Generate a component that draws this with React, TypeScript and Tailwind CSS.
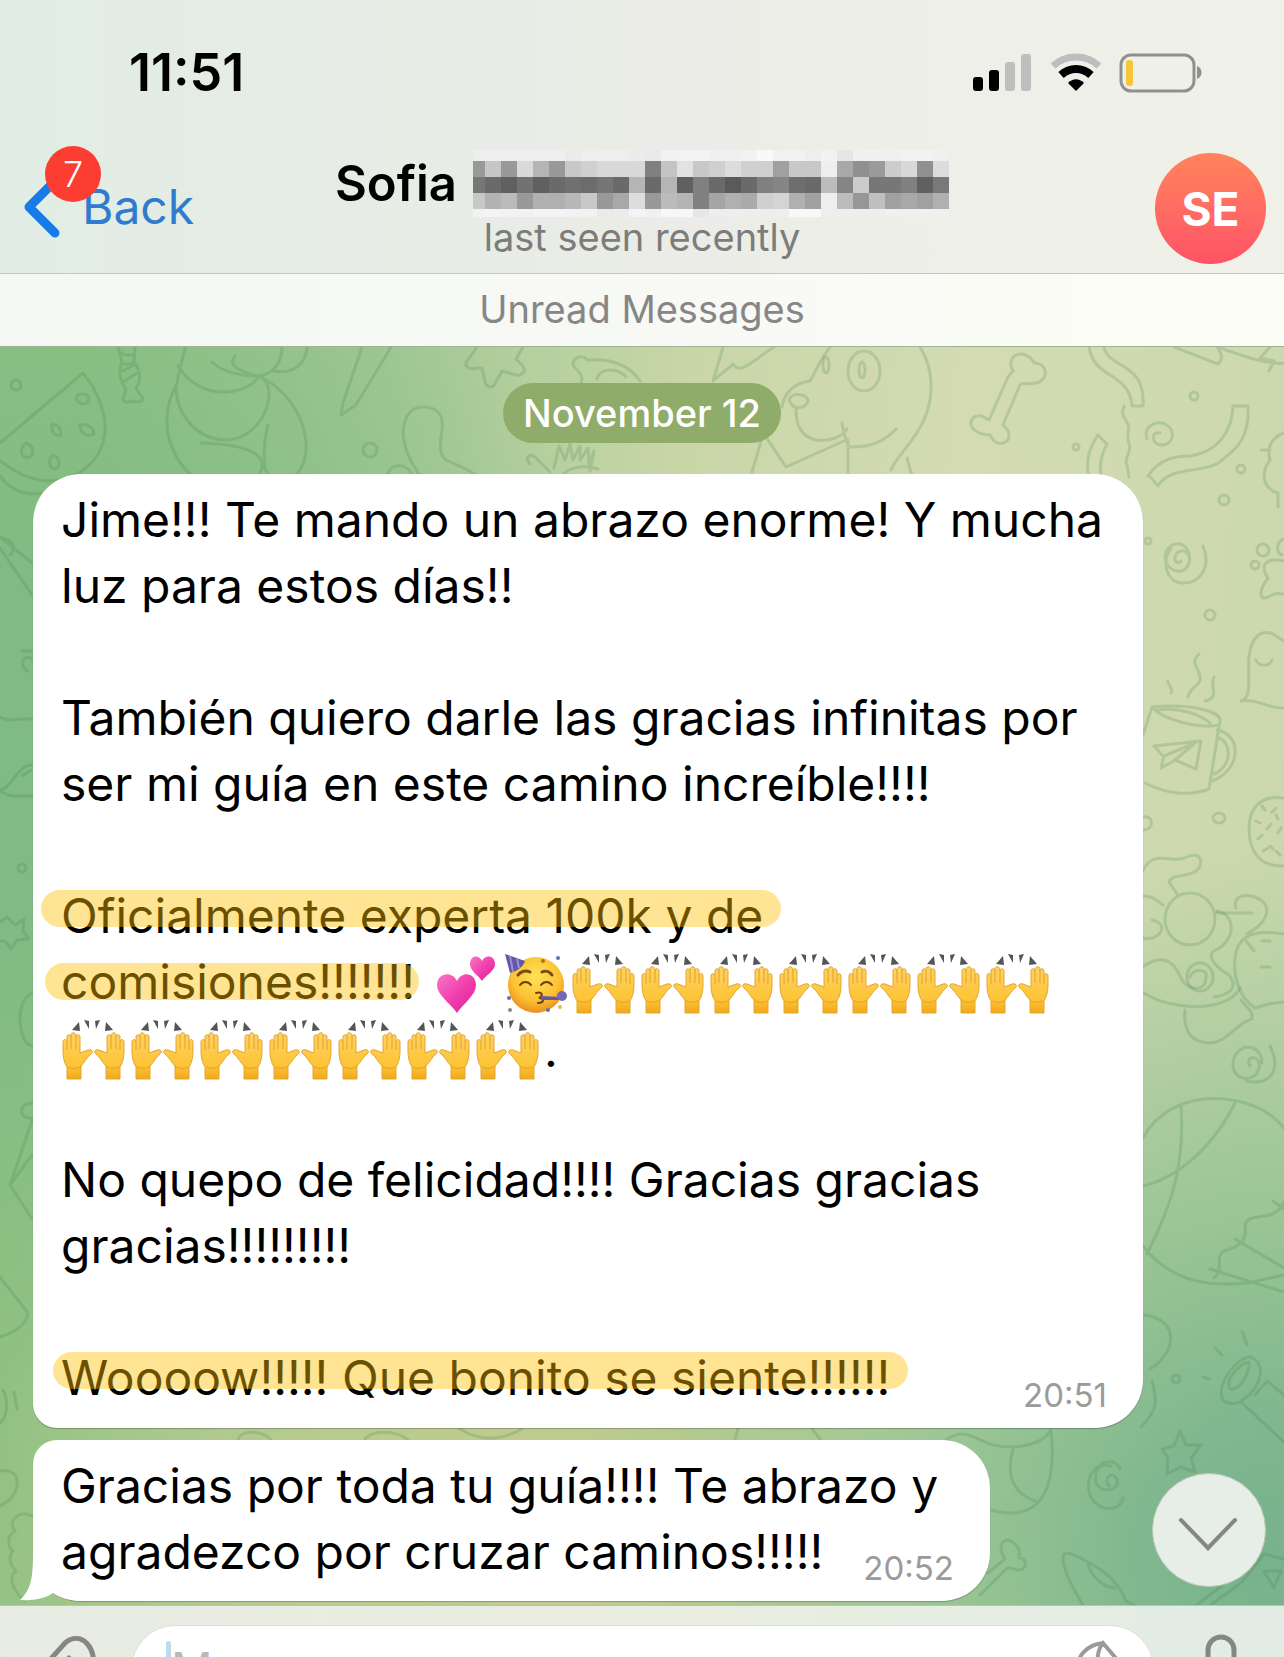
import type { ReactNode } from "react"

// grey levels of the masked surname, one pair of hex digits per cell
const maskRows = [
    { y: 0, h: 11, cells: "eeeeeeeeeeefebeeeeeeeceaf2f3f3f0f0f2f9f2f2eef2e6f0f0f0f2f2f0" },
    { y: 11, h: 16, cells: "99c699dab599c8d0d8d8d880c4e2c8cfdcd0d0a0c8c8eea8909accd890dc" },
    { y: 27, h: 16, cells: "776a6072606a706c756ab56ab560806a5a6a80856e6abc85cc7777806079" },
    { y: 43, h: 16, cells: "c8b2ba99b0b0b8c899a8dd99bbb480a5b0aad0d4b0a0eebc96c0a0a8a0b0" },
    { y: 59, h: 8, cells: "f2f4f2f2f4f4f2f2eaecf4f0f7f7e6eeeeeeeeeef8f8eeeeeeeef0f0f0f0" },
]

function MaskedName() {
    return (
        <svg className="h-[67px] w-[476px] shrink-0" viewBox="0 0 476 67" shapeRendering="crispEdges" aria-hidden="true">
            {maskRows.map((row) =>
                (row.cells.match(/../g) ?? []).map((c, i) => (
                    <rect
                        key={row.y + "-" + i}
                        x={i === 0 ? 0 : 12 + (i - 1) * 16}
                        y={row.y}
                        width={i === 0 ? 12 : 16}
                        height={row.h}
                        fill={"#" + c + c + c}
                    />
                ))
            )}
        </svg>
    )
}

function Hands() {
    return (
        <svg className="h-[62px] w-[69px] shrink-0" viewBox="0 0 69 62" aria-hidden="true">
            <defs>
                <linearGradient id="skin" x1="0" y1="0" x2="0" y2="1">
                    <stop offset="0" stopColor="#ffd262" />
                    <stop offset="0.7" stopColor="#fdc436" />
                    <stop offset="1" stopColor="#f3a81c" />
                </linearGradient>
                <g id="hand">
                    <path
                        d="M6 60V48C3 43 2 38 2 32V23c0-3 3-3 4-1V18c0-3 4-3 4 0v-2c0-3 4-3 5 0v2c0-3 4-3 4 0v16l8-3c4-1 6 2 3 4-4 3-6 8-10 12V60Z"
                        fill="url(#skin)"
                        stroke="#e3a530"
                        strokeWidth="1"
                    />
                    <path d="M6 22v9M10 18v12M15 18v12M7 48c5 2 9 2 13-1" stroke="#e0a22e" strokeWidth="1" fill="none" />
                </g>
            </defs>
            <use href="#hand" />
            <use href="#hand" transform="matrix(-1 0 0 1 65 0)" />
            <path d="m18 3-7 8 8 1Zm5-2 5 1 0 8Zm16 0-5 1 1 8Zm6 2 7 8-8 1Z" fill="#555" />
        </svg>
    )
}

function Hearts() {
    return (
        <svg className="h-[62px] w-[69px] shrink-0" viewBox="0 0 69 62" aria-hidden="true">
            <defs>
                <linearGradient id="pink" x1="0" y1="0" x2="1" y2="1">
                    <stop offset="0" stopColor="#f977c4" />
                    <stop offset="0.5" stopColor="#f23fae" />
                    <stop offset="1" stopColor="#dd1f95" />
                </linearGradient>
            </defs>
            <path d="M24 60C17 50 4 42 4 32c0-12 15-15 20-4 5-11 19-8 19 4 0 10-12 18-19 28Z" fill="url(#pink)" />
            <path d="M49 28c-4-6-12-10-12-17C37 2 46 1 49 8c3-7 13-6 13 3 0 7-9 11-13 17Z" fill="url(#pink)" />
        </svg>
    )
}

function PartyFace() {
    return (
        <svg className="h-[62px] w-[69px] shrink-0" viewBox="0 0 69 62" aria-hidden="true">
            <defs>
                <radialGradient id="face" cx="0.5" cy="0.35" r="0.65">
                    <stop offset="0" stopColor="#ffe257" />
                    <stop offset="0.65" stopColor="#fbc233" />
                    <stop offset="1" stopColor="#ea8f1e" />
                </radialGradient>
            </defs>
            <circle cx="34" cy="32" r="28" fill="url(#face)" />
            <path d="M3 1 23 8c-2 6-8 10-15 12Z" fill="#6556a8" />
            <path d="m8 3 3 16M15 5l2 10" stroke="#9b90d2" strokeWidth="2" />
            <path d="M16 22c3-4 8-5 12-3M40 19c4-2 8 0 10 3" stroke="#7a4b12" strokeWidth="3" strokeLinecap="round" fill="none" />
            <path d="M18 32c3-4 8-4 11 0M39 32c3-4 8-4 11 0" stroke="#6d3f0d" strokeWidth="2" strokeLinecap="round" fill="none" />
            <path d="M34 40c6-2 8 3 3 5 6 0 5 5-1 5" stroke="#6d3f0d" strokeWidth="2" strokeLinecap="round" fill="none" />
            <path d="m39 43 19 1v3l-19 0Z" fill="#6556a8" />
            <circle cx="60" cy="43" r="5" fill="#7567b6" />
            <circle cx="56" cy="5" r="2" fill="#5c73b4" />
            <circle cx="41" cy="8" r="2" fill="#a8741d" />
            <circle cx="7" cy="45" r="2" fill="#7567b6" />
            <circle cx="8" cy="57" r="2" fill="#888" />
            <circle cx="46" cy="57" r="2" fill="#5c73b4" />
            <circle cx="58" cy="54" r="2" fill="#e8b84c" />
        </svg>
    )
}

function Doodles() {
    return (
        <svg
            className="absolute inset-0 h-full w-full"
            viewBox="0 346 1284 1260"
            preserveAspectRatio="xMidYMin slice"
            fill="none"
            stroke="#3b7d47"
            strokeOpacity="0.2"
            strokeWidth="3"
            strokeLinecap="round"
            strokeLinejoin="round"
            aria-hidden="true"
        >
            {/* watermelon */}
            <path d="M0 442 83 372C98 390 106 412 105 430 103 458 80 479 50 480 30 480 14 470 0 460M0 475c12 16 26 20 42 17" />
            <path d="M76 398c2-7 12-6 13 0-1 7-10 6-13 0ZM52 423c8 1 10 8 9 12-8 0-10-6-9-12ZM80 424c8-2 14 4 14 9-8 4-14-2-14-9ZM26 442c8 3 9 11 2 15-8-2-9-9-2-15ZM53 454c8 4 8 11 2 14-7-2-7-9-2-14Z" />
            <circle cx="16" cy="384" r="5" />
            {/* candy */}
            <path d="M118 346 122 361C118 370 119 377 126 389L123 397c0 6 5 4 9 3 4 1 11 2 11-3l-7-9c5-8 5-18-2-27l1-15M121 352c5 3 10 3 14 0M121 362c6 2 9 2 13-1M120 371l15-7M123 381l14-9" />
            {/* penguin */}
            <path d="M185 346c-3 17-8 29-8 37-13 22-12 46-5 63 5 14 14 24 22 30M178 365c10 16 26 26 45 26 18 0 30-7 36-16M176 385c0 30 22 53 49 54 25 0 44-23 44-47 0-8-3-13-10-17M282 346c0 17-10 28-25 29-18 0-36-5-45-14M235 355c-8 10 5 15 22 20M307 346c-1 18-14 27-33 24M259 375c25 12 45 38 47 67 1 18-6 30-16 38-13 0-21-3-25-12-2-19 0-33 3-44M201 442c35 1 58 7 61 20 1 8-3 13-10 19" />
            {/* carrot */}
            <path d="M362 346 343 402 341 414 356 404 391 346" />
            {/* stars */}
            <path d="m477 346-10 14c-4 6 3 9 11 7l4 0 3 14c2 7 9 6 11 0l6-11 14 4c7 1 10-4 7-9l-7-7 7-12" />
            <circle cx="370" cy="449" r="7" />
            {/* worm */}
            <path d="M425 480c-12-12-22-34-22-49 1-18 10-26 22-25 14 1 19 10 17 23-3 16-2 26 4 30 12 6 22 8 32 17M387 475c5-15 21-14 28 4" />
            <path d="M580 384c6-11-4-14-7-20 0-8 8-11 15-5 30-2 44 9 52 21M597 378c2-11 20-12 29-2" />
            <path d="M530 463c-6-7 0-12 6-6l14 14M554 467l5-22 6 14 5-16 3 16 7-14 0 14 8-12 1 16 5-13-4 20M562 475c5-8 20-12 36-7" />
            {/* dog */}
            <path d="M713 380 723 346M713 380c8-8 17-13 20-17 7 12 20-4 41-17M830 346c-12 16-16 28-20 34-17 2-26 13-28 26M789 399c2-8 18-7 19 1-3 8-15 10-19-1ZM796 408c0 18 6 28 20 31 13 2 26-3 31-11M842 422c2 12 4 18 7 24 24 1 38-8 47-18M920 346c14 22 14 50 4 73-10 22-28 37-33 50M846 439l-60 27-20-30M762 437l-10 34M848 439v34M907 457l5 18" />
            <ellipse cx="864" cy="370" rx="16" ry="20" />
            <ellipse cx="862" cy="369" rx="3" ry="8" />
            <ellipse cx="826" cy="364" rx="3" ry="8" />
            {/* bone */}
            <path d="M1013 370C1004 353 1026 346 1034 362c12-1 17 16 2 20-10 2-15-1-16 2l-17 40c8 6 8 16 0 18-7 2-10-3-13-8-12 0-24-8-17-17 6-5 11-1 16 2l19-43Z" />
            <path d="M1089 346c5 33 40 24 43 59h11c3-45-35-37-39-59M1124 405c-4 10 2 12 3 17 5 4-2 14 2 20 4 8-6 15-2 22l2 12M1098 434c-15 22-9 34-10 42M1107 443c-10 18-5 26-7 34M1098 434l9 9" />
            <path d="M1174 346l44 17c7-8 2-12-1-17 20 6 46 18 67 16M1270 346l-10 11 14 3-5 10" />
            <path d="M1233 405h15c2 36-15 45-31 58-20 9-48 3-59 22-3-3-8-11-10-10 12-18 28-20 43-20 27-5 41-24 42-50Z" />
            <path d="M1147 438c-4-12 8-19 18-15 12 6 8 22-4 21-10-1-10-14-1-12M1181 560c-6 5-8-3-4-8 6-6 15 1 12 10-4 14-24 9-24-7 2-14 20-18 24-2M1203 545c8 19-1 37-20 37-17 0-22-22-12-34" />
            <circle cx="1194" cy="395" r="4" />
            <circle cx="1241" cy="468" r="4" />
            <circle cx="1224" cy="499" r="5" />
            <circle cx="1076" cy="446" r="3" />
            <circle cx="1148" cy="540" r="3" />
            <circle cx="1210" cy="614" r="5" />
            {/* bird and paw */}
            <path d="M1284 432c-10 4-18 12-14 27-10 14-7 28 8 33l0 14M1261 449h9" />
            <circle cx="1263" cy="549" r="6" />
            <circle cx="1255" cy="564" r="4" />
            <path d="M1284 538c-7 2-9 13-2 16M1284 560c-20-4-24 5-16 17-10 13-9 25 2 18 6-4 10-2 14-2" />
            {/* ghost */}
            <path d="M1241 700c12-4 6-22 8-45 3-18 10-26 22-23l13 8M1241 700c16-3 28 8 43 7M1256 659c3 7 13 7 16 0" />
            {/* mug */}
            <path d="M1152 706c43-4 70 6 68 14l-11 68c-20 8-45 4-64-6M1152 706l-9 28M1152 706c10 12 44 22 67 18M1158 709c20-3 42 4 52 13M1217 729c25 4 25 40-5 51M1217 736c16 5 15 30-3 37M1171 692c3-6-4-8-3-12M1188 696c3-12 14-11 12-21-2-9-10-13-1-22M1205 700c16-4 4-14 9-24" />
            <path d="m1154 745 47-5-5 28-21-9 20-17-31 13-3 12 16-9M1154 745l8 9" />
            <ellipse cx="1219" cy="817" rx="6" ry="5" />
            <path d="M1144 816c9-2 11 12 0 13" />
            {/* cookie */}
            <path d="M1284 797c-23-3-35 9-35 31 0 26 14 38 35 37M1262 805l3 4M1272 811l4-4M1256 820l4 2M1267 828l4-5M1278 832l3-5M1258 838l4-4M1270 845l3 3M1263 850l5-3M1276 850l4 4M1278 818l-2-4" />
            {/* dancer and bowl */}
            <path d="M1143 870c10-24 30-5 46-15 11-3 14 4 10 12-8 11-26 4-30 14l8 12M1143 895c10 0 14 5 20 9M1143 937c16 4 28-14 9-18M1144 965c19-13 30-4 36 10 5 14 25 18 26 2 3-10-14-10-16-1M1144 992c28 18 83 20 96-5M1185 1009c-2 20 6 32 23 33 20 0 28-20 44-24 2-8-8-14-11-19M1217 910c20 4 19 30-3 40-9 6 5 18 15 24 10 13 0 20-15 22" />
            <ellipse cx="1190" cy="918" rx="25" ry="26" />
            <ellipse cx="1200" cy="976" rx="13" ry="14" />
            <path d="M1236 907c-6-18 28-16 31 2-1 13-12 19-20 24M1217 912h35M1284 933c-20-3-42-4-48 18-5 24 4 46 19 56 10-4 16-5 29-6M1262 940h8M1261 966h9M1246 940l8 10" />
            <path d="M1250 1065c-6-11 12-12 9 2-3 15-27 14-26-5 2-20 28-22 29 0M1270 1045c12 25 0 40-24 35" />
            {/* ball */}
            <path d="M1143 1137c28-54 112-48 141-10M1143 1185c34-8 70-38 93-85M1181 1104c4 60-9 99-34 149M1143 1245c30 40 75 40 105 37l36-8M1284 1201c-10 22-34 9-39 22 2 15-2 22-21 27-10 5 1 18-10 27M1273 1200l11 8M1235 1238l49 29M1210 1268l74 23" />
            {/* flashlight and lower right */}
            <path d="M1144 1314c36 4 33 38 6 54M1152 1380c6 22 5 30-11 46" />
            <path d="m1251 1356c-16 0-36 30-28 43 7 6 16 4 21-1 14-9 25-33 7-42ZM1249 1361c-13 3-24 20-19 27 10 2 20-16 19-27ZM1241 1401l43 40M1267 1380l17 14M1267 1380l-12 14M1215 1347l7 7M1203 1376l6 2M1242 1330l5 14" />
            <circle cx="1176" cy="1378" r="4" />
            <path d="m1180 1430 6 14 15 0-10 13 4 14-14-5-14 7 1-16-6-9 12-3Z" />
            <path d="M1109 1485c-7-8 4-16 8-7 4 12-17 16-21 3-4-20 19-27 24-13M1123 1497c-3 16-30 14-34-7-3-18 9-29 22-25" />
            <path d="M946 1439c24-17 31 8 65 7 22-1 35-8 40-17 8 78-24 90-60 80M1013 1448c-8 28 2 45 22 52" />
            <path d="m988 1572 17-14c-10-14 1-26 11-14 6 6 2 10 3 13 10 0 7 13-1 12-8-2-10-4-15 2l-23 23" />
            <path d="M1083 1604c-26-43-24-58-9-50 24 11 44 24 52 46l9 5M1088 1563c3 14 18 24 27 24M1208 1606l34-25 22-28 20 5M1228 1580l-34 26M1264 1570h17l-7 17Z" />
            {/* left edge */}
            <path d="M0 536 32 562M0 547 32 594M0 536c16 4 15 12 10 18M22 650h10M32 658c-8-6-14 6-5 12M0 716c12 6 20 0 32 2M0 790c14-6 18-26 32-26M0 790c12 8 22 4 32 5M22 775l9-6" />
            <circle cx="22" cy="867" r="4" />
            <path d="m0 921 7-5 8 8 9-6-1 12 6 8-12 1-6 9-6-8-5 0M32 992c-18 8-14 50 0 53M32 1102c-14 0-14 16 0 15M32 1120 10 1184l22 34M10 1184l22-30M0 1276l28 36c-2 14-16 20-28 24M3 1389c6 12 4 28-3 33M14 1391l3 17M0 1470c22-5 24 24 0 35M32 1515c-14-6-25 5-17 15-10 6-6 17-2 20-7 8 0 17 3 20-9 7-2 20 8 30" />
            <path d="M238 1440c0-12 30-12 34 2M365 1438c10-12 38-6 44 2M460 1428c22 14 44 10 62 0M820 1438l-8-10M735 1438l3-10" />
        </svg>
    )
}

function Highlight({ children, className }: { children: ReactNode; className: string }) {
    return (
        <span className="relative whitespace-nowrap">
            {children}
            <span className={"absolute h-[37px] rounded-full bg-[#ffbe00]/42 " + className} />
        </span>
    )
}

export default function App() {
    return (
        <div className="flex h-screen flex-col overflow-hidden bg-[#e6ece5] font-['Inter','Liberation_Sans',sans-serif] text-black">
            <header className="border-b border-[#c3c8c2] bg-linear-to-r from-[#e1ede4] via-[#ebece7] to-[#f0f2e9]">
                <div className="flex h-[146px] items-center justify-between pr-[82px] pl-[129px]">
                    <time className="text-[52px] leading-none font-semibold">11:51</time>
                    <svg className="h-10 w-[230px]" viewBox="0 0 230 40" aria-label="Signal, Wi-Fi and battery">
                        <rect x="1" y="24" width="10" height="14" rx="3" />
                        <rect x="17" y="17" width="10" height="21" rx="3" />
                        <rect x="33" y="9" width="10" height="29" rx="3" fill="#bebebe" />
                        <rect x="49" y="1" width="10" height="37" rx="3" fill="#bebebe" />
                        <path d="M81 13c13-12 33-12 46 0" fill="none" stroke="#bebebe" strokeWidth="7" />
                        <path d="M89 22c9-8 21-8 30 0" fill="none" stroke="#000" strokeWidth="8" />
                        <path d="m104 38-8-8c5-5 11-5 16 0Z" />
                        <rect x="149" y="2" width="73" height="36" rx="10" fill="none" stroke="#8f918e" strokeWidth="3" />
                        <rect x="154" y="7" width="7" height="26" rx="3" fill="#f8c53a" />
                        <path d="M225 13c6 2 6 11 0 13Z" fill="#8f918e" />
                    </svg>
                </div>
                <div className="grid h-[127px] grid-cols-[1fr_auto_1fr] items-start px-[18px]">
                    <button className="relative flex items-center justify-self-start pt-7 text-[48px] leading-[58px] text-[#2f7bd0]">
                        <svg className="h-[66px] w-12" viewBox="0 0 48 66" fill="none" stroke="#187bea" strokeWidth="9" aria-hidden="true">
                            <path d="M37 7 11 33 37 59" strokeLinecap="round" strokeLinejoin="round" />
                        </svg>
                        <span className="pl-4">Back</span>
                        <span className="absolute top-0 left-[27px] flex size-14 items-center justify-center rounded-full bg-[#fc3d31] text-[36px] leading-none font-light text-white">
                            7
                        </span>
                    </button>
                    <div className="flex flex-col items-center pt-1">
                        <h1 className="flex h-[67px] items-center gap-4 text-[49px] leading-[67px] font-semibold">
                            Sofia
                            <MaskedName />
                        </h1>
                        <p className="text-[38px] leading-10 text-[#7c7d7b]">last seen recently</p>
                    </div>
                    <button className="mt-[7px] flex size-[111px] items-center justify-center justify-self-end rounded-full bg-linear-to-b from-[#ff835c] to-[#fe5267] text-[46px] leading-none font-bold text-white">
                        SE
                    </button>
                </div>
            </header>

            <div className="border-b border-[#9fb295] bg-linear-to-r from-[#f3f8f2] via-[#f8f9f5] to-[#fcfdf5] pb-0.5 text-center text-[38px] leading-[70px] text-[#868686]">
                Unread Messages
            </div>

            <main className="relative h-[1258px] shrink-0 bg-[radial-gradient(circle_at_100%_96%,#76b28d_0%,#80b78e_8%,#9cc695_20%,transparent_40%),radial-gradient(circle_at_45%_100%,#c3cc8e_0%,#bccb8e_16%,transparent_42%),radial-gradient(circle_at_0%_32%,#7fbb84_0%,#80bb83_10%,transparent_42%),linear-gradient(95deg,#90c182_6%,#a4c995_28%,#c9d6a8_50%,#d4dbb2_70%,#c9d7ac)]">
                <Doodles />
                <div className="relative flex flex-col items-start gap-3 pl-[33px]">
                    <time className="-ml-[33px] mt-9 mb-[19px] h-[60px] self-center rounded-full bg-[#8fac6b] px-5 text-[38px] leading-[60px] font-medium text-white">
                        November 12
                    </time>

                    <article className="relative w-[1110px] rounded-[48px] rounded-bl-3xl bg-white px-7 pt-[13px] pb-[17px] text-[48px] leading-[66px] shadow-[0_1px_1px_#00000040]">
                        <p>
                            Jime!!! Te mando un abrazo enorme! Y mucha
                            <br />
                            luz para estos días!!
                        </p>
                        <p className="pt-[66px]">
                            También quiero darle las gracias infinitas por
                            <br />
                            ser mi guía en este camino increíble!!!!
                        </p>
                        <p className="pt-[66px]">
                            <Highlight className="top-1 -right-[18px] -left-5">Oficialmente experta 100k y de</Highlight>
                        </p>
                        <div className="flex h-[66px]">
                            <Highlight className="top-[14px] -right-1 -left-4">comisiones!!!!!!!</Highlight>
                            <span className="flex items-center pt-1 pl-[18px]">
                                <Hearts />
                                <PartyFace />
                                {Array.from({ length: 7 }, (_, i) => (
                                    <Hands key={i} />
                                ))}
                            </span>
                        </div>
                        <div className="flex h-[66px] items-center pt-1">
                            {Array.from({ length: 7 }, (_, i) => (
                                <Hands key={i} />
                            ))}
                            .
                        </div>
                        <p className="pt-[66px]">
                            No quepo de felicidad!!!! Gracias gracias
                            <br />
                            gracias!!!!!!!!!
                        </p>
                        <p className="pt-[66px]">
                            <Highlight className="top-1 -right-[18px] -left-2">Woooow!!!!! Que bonito se siente!!!!!!</Highlight>
                        </p>
                        <time className="absolute right-9 bottom-[13px] text-[33px] leading-10 text-[#9b9b9b]">20:51</time>
                    </article>

                    <article className="relative w-[957px] rounded-[48px] rounded-tl-3xl bg-white px-7 pt-[13px] pb-4 text-[48px] leading-[66px] shadow-[0_1px_1px_#00000040]">
                        <svg className="absolute bottom-0 -left-[13px] h-[50px] w-[66px]" viewBox="0 0 66 50" fill="#fff" aria-hidden="true">
                            <path d="M13 0C13 25 12 38 0 49 14 50 26 47 33 42 40 47 50 50 65 50V0Z" />
                        </svg>
                        <p className="relative">
                            Gracias por toda tu guía!!!! Te abrazo y
                            <br />
                            agradezco por cruzar caminos!!!!!
                        </p>
                        <time className="absolute right-9 bottom-[13px] text-[33px] leading-10 text-[#9b9b9b]">20:52</time>
                    </article>
                </div>

                <button
                    aria-label="Scroll to bottom"
                    className="absolute right-[18px] bottom-[18px] flex size-[114px] items-center justify-center rounded-full border border-[#b9c9b8] bg-[#e6eee7]"
                >
                    <svg className="mt-2 h-9 w-[62px]" viewBox="0 0 62 36" fill="none" stroke="#868686" strokeWidth="4" aria-hidden="true">
                        <path d="m3 4 27 28L57 4" strokeLinecap="round" />
                    </svg>
                </button>
            </main>

            <footer className="flex shrink-0 items-start border-t border-[#b9c4ad] bg-linear-to-r from-[#e8ebe3] via-[#eaeee0] to-[#e2ece5]">
                <button aria-label="Attach" className="mt-[29px] ml-8 w-[99px]">
                    <svg className="h-20 w-[68px]" viewBox="0 0 68 80" fill="none" stroke="#868686" strokeWidth="5" strokeLinecap="round" aria-hidden="true">
                        <path d="M60 32C66 16 50-6 33 8L8 36M37 23 18 44" />
                    </svg>
                </button>
                <label className="mt-[19px] flex flex-1 items-center rounded-[44px] border border-[#dcdfd8] bg-white pl-[34px]">
                    <span className="h-14 w-[5px] rounded-full bg-[#b9dcf2]" />
                    <input type="text" aria-label="Message" placeholder="Message" className="min-w-0 flex-1 text-[46px] leading-[86px] outline-none placeholder:text-[#b8b8b8]" />
                    <svg className="mr-[26px] h-[60px] w-[52px]" viewBox="0 0 52 60" fill="none" stroke="#9a9a9a" strokeWidth="4" aria-hidden="true">
                        <path d="M28 4C10 6 2 18 2 32c0 14 10 24 24 24s24-10 24-26L28 4c-7 8-6 22-4 30 6 3 18 4 26-4" />
                    </svg>
                </label>
                <button aria-label="Record voice message" className="mt-[27px] mr-[38px] ml-[42px]">
                    <svg className="h-20 w-[50px]" viewBox="0 0 50 80" fill="none" stroke="#868686" strokeWidth="5" strokeLinecap="round" aria-hidden="true">
                        <rect x="12" y="4" width="26" height="44" rx="13" />
                        <path d="M3 36c0 30 44 30 44 0M25 58v14" />
                    </svg>
                </button>
            </footer>
        </div>
    )
}
